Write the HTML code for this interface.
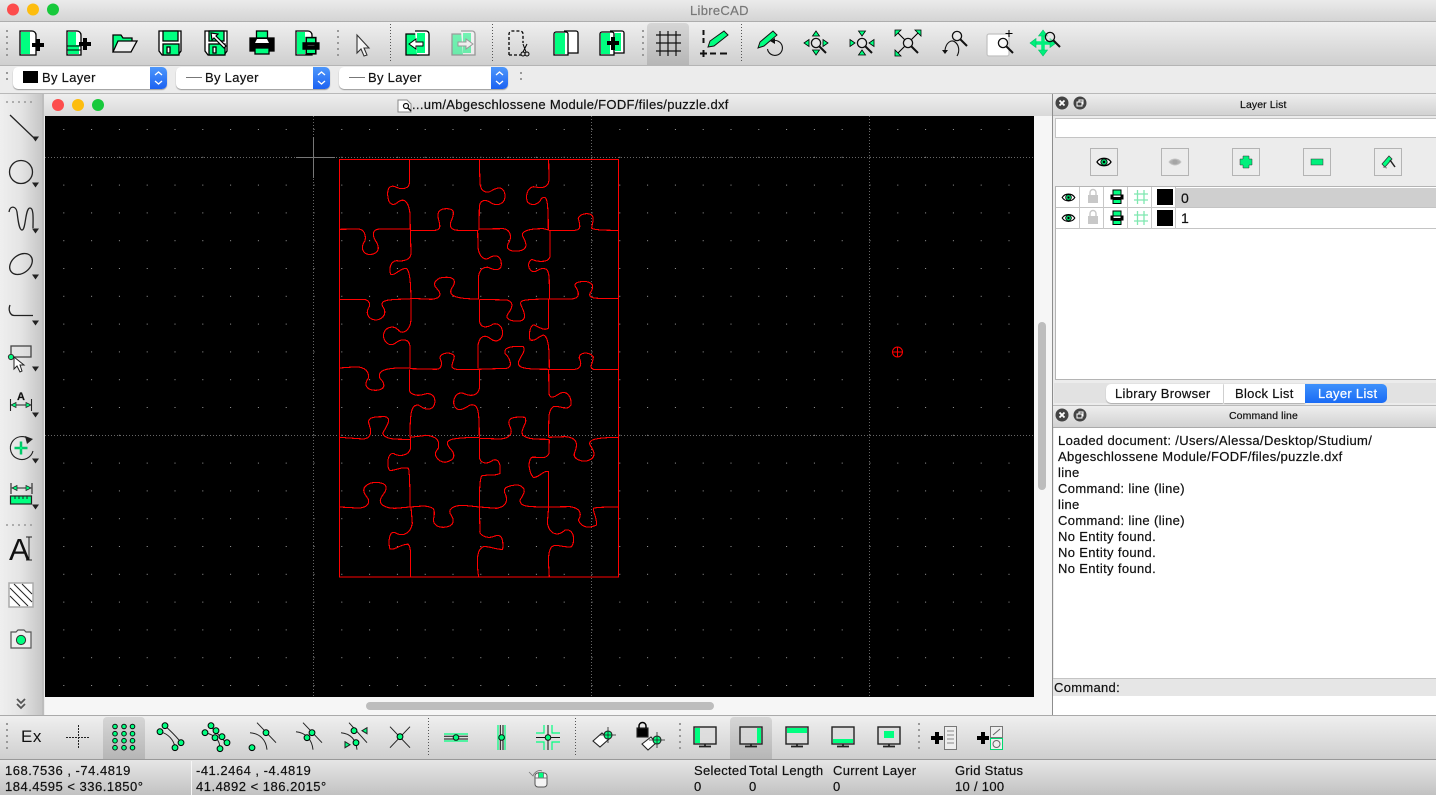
<!DOCTYPE html>
<html><head><meta charset="utf-8"><title>LibreCAD</title>
<style>
html,body{margin:0;padding:0;width:1436px;height:795px;overflow:hidden;background:#ececec;font-family:"Liberation Sans",Arial,sans-serif;color:#111}
.b{position:absolute}
.t{position:absolute;white-space:nowrap;font-size:13px;line-height:16px;letter-spacing:.3px;-webkit-text-stroke:.2px currentColor}
svg{position:absolute;left:0;top:0}
</style></head><body>
<div class="b" style="left:0;top:0;width:1436px;height:21px;background:linear-gradient(#ebebeb,#d4d4d4);border-bottom:1px solid #adadad"></div>
<div class="b" style="left:0;top:22px;width:1436px;height:43px;background:linear-gradient(#efefef,#cfcfcf);border-bottom:1px solid #b4b4b4"></div>
<div class="b" style="left:0;top:66px;width:1436px;height:27px;background:#ececec;border-bottom:1px solid #b9b9b9"></div>
<div class="b" style="left:0;top:94px;width:42px;height:622px;background:linear-gradient(90deg,#efefef,#e4e4e4 50%,#c6c6c6)"></div>
<div class="b" style="left:42px;top:94px;width:2px;height:622px;background:#bdbdbd"></div>
<div class="b" style="left:44px;top:94px;width:1008px;height:22px;background:linear-gradient(#efefef,#d9d9d9);border-radius:5px 5px 0 0"></div>
<div class="b" style="left:45px;top:116px;width:989px;height:581px;background:#000"></div>
<div class="b" style="left:45px;top:697px;width:989px;height:18px;background:#f6f6f6"></div>
<div class="b" style="left:1034px;top:116px;width:18px;height:599px;background:#f6f6f6"></div>
<div class="b" style="left:366px;top:702px;width:348px;height:8px;background:#bdbdbd;border-radius:4px"></div>
<div class="b" style="left:1038px;top:322px;width:8px;height:168px;background:#bdbdbd;border-radius:4px"></div>
<div class="b" style="left:1052px;top:94px;width:1px;height:622px;background:#8d8d8d"></div>
<div class="b" style="left:1053px;top:94px;width:383px;height:622px;background:#ececec"></div>
<div class="b" style="left:1053px;top:94px;width:383px;height:21px;background:linear-gradient(#eee,#d2d2d2);border-bottom:1px solid #bbb"></div>
<div class="b" style="left:1055px;top:118px;width:381px;height:18px;background:#fff;border:1px solid #c4c4c4;border-right:0"></div>
<div class="b" style="left:1055px;top:186px;width:381px;height:194px;background:#fff;border:1px solid #b4b4b4;border-right:0;box-sizing:border-box"></div>
<div class="b" style="left:1176px;top:188px;width:260px;height:19px;background:#cfcfcf"></div>
<div class="b" style="left:1056px;top:207px;width:380px;height:1px;background:#c4c4c4"></div>
<div class="b" style="left:1056px;top:228px;width:380px;height:1px;background:#c4c4c4"></div>
<div class="b" style="left:1079px;top:187px;width:1px;height:42px;background:#c8c8c8"></div>
<div class="b" style="left:1103px;top:187px;width:1px;height:42px;background:#c8c8c8"></div>
<div class="b" style="left:1127px;top:187px;width:1px;height:42px;background:#c8c8c8"></div>
<div class="b" style="left:1151px;top:187px;width:1px;height:42px;background:#c8c8c8"></div>
<div class="b" style="left:1175px;top:187px;width:1px;height:42px;background:#c8c8c8"></div>
<div class="b" style="left:1054px;top:383px;width:382px;height:20px;background:#e2e2e2"></div>
<div class="b" style="left:1106px;top:384px;width:117px;height:19px;background:#fff;border-radius:5px 0 0 5px;box-shadow:0 1px 1px #aaa"></div>
<div class="b" style="left:1224px;top:384px;width:81px;height:19px;background:#fff;box-shadow:0 1px 1px #aaa"></div>
<div class="b" style="left:1305px;top:384px;width:82px;height:19px;background:linear-gradient(#3e91fb,#1a6bf5);border-radius:0 5px 5px 0"></div>
<div class="b" style="left:1053px;top:405px;width:383px;height:21px;background:linear-gradient(#eee,#d2d2d2);border-top:1px solid #bbb;border-bottom:1px solid #aaa"></div>
<div class="b" style="left:1054px;top:428px;width:382px;height:250px;background:#fff"></div>
<div class="b" style="left:1053px;top:678px;width:383px;height:17px;background:#e6e6e6;border-top:1px solid #c4c4c4"></div>
<div class="b" style="left:1053px;top:696px;width:383px;height:19px;background:#fff"></div>
<div class="b" style="left:0;top:715px;width:1436px;height:1px;background:#aaa"></div>
<div class="b" style="left:0;top:716px;width:1436px;height:43px;background:linear-gradient(#efefef,#cfcfcf);border-bottom:1px solid #999"></div>
<div class="b" style="left:0;top:760px;width:1436px;height:35px;background:linear-gradient(#e6e6e6,#c2c2c2)"></div>
<div class="b" style="left:191px;top:761px;width:1px;height:34px;background:#f6f6f6"></div>
<div class="b" style="left:647px;top:23px;width:42px;height:42px;background:linear-gradient(#d6d6d6,#b6b6b6);border-radius:4px 4px 0 0"></div>
<div class="b" style="left:103px;top:717px;width:42px;height:42px;background:linear-gradient(#d6d6d6,#b6b6b6);border-radius:4px 4px 0 0"></div>
<div class="b" style="left:730px;top:717px;width:42px;height:42px;background:linear-gradient(#d6d6d6,#b6b6b6);border-radius:4px 4px 0 0"></div>
<div class="b" style="left:13px;top:67px;width:154px;height:22px;background:#fff;border-radius:5px;box-shadow:0 1px 1px #999"></div>
<div class="b" style="left:150px;top:67px;width:17px;height:22px;background:linear-gradient(#4d97fb,#1c62f2);border-radius:0 5px 5px 0"></div>
<div class="b" style="left:176px;top:67px;width:154px;height:22px;background:#fff;border-radius:5px;box-shadow:0 1px 1px #999"></div>
<div class="b" style="left:313px;top:67px;width:17px;height:22px;background:linear-gradient(#4d97fb,#1c62f2);border-radius:0 5px 5px 0"></div>
<div class="b" style="left:339px;top:67px;width:169px;height:22px;background:#fff;border-radius:5px;box-shadow:0 1px 1px #999"></div>
<div class="b" style="left:491px;top:67px;width:17px;height:22px;background:linear-gradient(#4d97fb,#1c62f2);border-radius:0 5px 5px 0"></div>

<svg width="1436" height="795" viewBox="0 0 1436 795" fill="none">
<defs>
<pattern id="dots" x="35.5" y="129" width="27.8" height="27.8" patternUnits="userSpaceOnUse"><rect width="1" height="1" fill="#9a9a9a"/></pattern>
<clipPath id="cv"><rect x="45" y="116" width="989" height="581"/></clipPath>
<g id="eye"><path d="M-7,0C-4,-5 4,-5 7,0C4,5 -4,5 -7,0Z" fill="#fff" stroke="#000" stroke-width="1.3"/><circle r="3.2" fill="#00c864" stroke="#000" stroke-width=".8"/><circle r="1.2" fill="#000"/></g>
<g id="prn"><rect x="-4" y="-7" width="8" height="5" fill="#00ff80" stroke="#000"/><rect x="-6.5" y="-2.5" width="13" height="5" fill="#000"/><rect x="-3.5" y="-1.5" width="7" height="1.5" fill="#fff"/><rect x="-4" y="2.5" width="8" height="4" fill="#00ff80" stroke="#000"/></g>
<g id="grd" stroke="#7fe8b0" stroke-width="1.3"><path d="M-3.5,-7V7M3,-7V7M-7,-3H7M-7,3H7"/></g>
<g id="lock"><rect x="-5" y="-2" width="10" height="8" fill="#c8c8c8"/><path d="M-3,-2V-4.5a3,3 0 0 1 6,0V-2" stroke="#c8c8c8" stroke-width="1.4"/></g>
<g id="arr"><path d="M-3.5,-2.5H3.5L0,2.5Z" fill="#222"/></g>
<g id="mag"><circle r="4.6" fill="#eee" fill-opacity=".4" stroke="#111" stroke-width="1.3"/><path d="M3.5,3.5L10,10" stroke="#111" stroke-width="2"/></g>
<g id="mon"><rect x="-11" y="-11" width="22" height="17" fill="#dcdcdc" fill-opacity=".7" stroke="#222" stroke-width="1.4"/><path d="M0,6V8M-6,8.500H6" stroke="#222" stroke-width="1.800"/></g>
<g id="sd"><circle r="2.900" fill="#00ff80" stroke="#000" stroke-width="1"/></g>
</defs>
<rect x="45" y="116" width="989" height="581" fill="url(#dots)"/>
<g clip-path="url(#cv)" stroke="#666" stroke-width="1" stroke-dasharray="1 2">
<path d="M45,157.5H1034M45,435.5H1034M313.5,116V697M591.5,116V697M869.5,116V697"/>
</g>
<path d="M313.5,137V178M296,157.5H335" stroke="#777" stroke-width="1"/>
<circle cx="897.5" cy="352" r="5" stroke="#f00"/><path d="M892,352H903M897.5,347V357" stroke="#f00"/>

<g fill="none" stroke="#f00" stroke-width="3.3" shape-rendering="crispEdges" transform="translate(330,150) scale(.3333)">
<rect x="28" y="28" width="838" height="1253"/>
<path d="M238,28L238,100C238,115 215,120 200,112C180,102 172,115 173,135C175,165 190,170 205,155C220,145 235,150 240,190L241,240L243,310C243,330 220,335 200,332C178,335 178,360 182,373C195,378 210,355 228,355C240,360 242,400 243,448L243,510C240,545 215,555 205,540C190,525 165,530 160,555C162,580 180,590 195,580C215,565 238,565 240,590L240,656"/>
<path d="M448,28L450,100C452,125 470,132 485,122C505,110 522,110 525,135C527,160 505,170 485,160C465,145 448,150 448,175L447,240"/>
<path d="M443,240L444,290C446,320 465,335 480,322C500,312 515,320 514,345C512,365 490,360 475,352C455,350 445,365 445,390L445,448"/>
<path d="M448,448L448,510C450,535 470,535 490,522C510,518 518,535 518,550C515,575 495,578 480,565C460,550 445,565 444,590L444,656"/>
<path d="M656,28L657,90C655,115 635,115 610,110C590,115 587,140 592,155C605,170 625,165 635,145C650,135 655,145 655,240"/>
<path d="M660,240L660,320C655,340 620,335 605,328C590,340 595,360 610,365C625,365 630,350 650,358C660,370 658,400 658,448"/>
<path d="M656,448L655,535C640,545 620,525 610,525C600,530 596,550 600,570C615,575 625,560 640,555C655,560 658,590 658,656"/>
<path d="M28,238L85,237C105,238 108,260 105,272C92,290 95,312 120,314C150,310 150,290 135,270C125,250 130,238 150,237L240,237"/>
<path d="M240,241L315,241C335,240 330,225 325,205C320,185 330,176 350,176C375,176 373,190 365,210C355,230 365,241 385,241L445,241"/>
<path d="M445,237L520,236C545,240 545,265 535,280C525,300 545,305 565,303C595,300 590,280 580,262C570,245 590,236 640,236L657,240"/>
<path d="M657,241L735,241C755,240 750,225 745,205C750,190 775,188 785,195C795,205 785,225 785,235C795,242 866,241 866,241"/>
<path d="M28,448L100,448C120,450 122,465 115,475C105,495 120,510 140,510C165,505 170,485 158,470C150,450 170,448 240,447"/>
<path d="M240,445L305,448C335,445 335,430 320,415C305,400 320,382 345,382C375,380 380,395 365,415C355,435 370,447 445,447"/>
<path d="M448,448L530,450C550,455 550,470 535,490C520,510 550,515 570,513C590,510 585,490 575,470C565,450 575,448 656,447"/>
<path d="M656,447L725,447C745,445 750,435 740,415C725,400 745,393 770,395C795,400 790,415 780,430C775,445 790,447 866,445"/>
<path d="M240,656L320,658C340,655 335,635 330,625C330,605 370,605 373,620C370,640 355,655 380,658L445,658"/>
<path d="M445,658L530,655C550,650 540,625 525,610C520,590 550,588 580,590C590,605 565,625 565,640C565,655 590,658 657,658"/>
<path d="M657,658L735,658C755,655 755,640 748,625C745,605 780,605 790,620C790,640 775,650 790,658L866,658"/>
</g>
<g fill="none" stroke="#f00" stroke-width="3.3" shape-rendering="crispEdges" transform="translate(330,360) scale(.3333)">
<path d="M28,24L70,21C110,18 118,40 115,55C100,75 110,90 135,91C170,90 165,70 150,55C140,30 170,22 240,24"/>
<path d="M238,28L238,90C240,105 265,110 285,102C315,95 320,125 310,140C295,155 280,145 265,135C245,135 240,150 240,232"/>
<path d="M242,232L242,265C235,290 205,290 190,280C170,280 170,325 180,332C200,330 215,320 235,325C240,335 240,441 240,441"/>
<path d="M243,441L247,490C240,525 215,530 195,518C175,510 175,555 180,567C195,572 215,550 235,553C245,565 242,600 241,652"/>
<path d="M448,28L448,85C445,105 425,112 400,100C380,95 368,115 372,135C380,155 395,152 420,135C445,130 448,150 448,232"/>
<path d="M448,235L448,290C450,310 470,315 490,300C510,295 512,320 510,340C495,350 470,342 455,348C447,360 448,441 448,441"/>
<path d="M448,441L450,510C445,525 470,537 490,530C520,515 520,550 518,568C500,570 480,558 460,560C438,570 440,610 446,652"/>
<path d="M656,28L657,100C660,120 675,110 690,100C715,90 725,115 723,135C710,155 690,135 670,140C655,150 656,170 656,232"/>
<path d="M658,238L657,280C650,300 625,290 605,292C590,310 600,340 610,352C625,355 640,330 655,335L656,441"/>
<path d="M656,441L652,490C660,525 685,530 705,510C730,505 738,540 725,560C705,565 680,550 665,560C650,580 657,620 658,652"/>
<path d="M28,232L100,237C125,235 125,215 118,195C108,170 135,170 165,170C190,175 165,205 158,220C165,240 200,238 240,238"/>
<path d="M240,232L290,226C320,230 330,240 325,265C305,285 325,305 345,307C380,300 375,280 360,265C340,240 355,233 448,232"/>
<path d="M448,235L510,237C540,235 550,220 540,200C525,170 560,170 585,172C595,190 570,205 578,225C590,238 620,238 657,238"/>
<path d="M657,232L705,230C740,232 745,250 735,275C725,295 750,305 770,303C800,295 795,275 780,255C775,240 790,233 866,232"/>
<path d="M28,441L80,444C110,445 125,430 110,410C85,380 120,367 140,367C175,370 175,385 155,410C140,435 170,445 195,445L240,441"/>
<path d="M240,441L280,438C315,440 315,450 312,470C305,495 325,502 340,502C375,500 375,480 360,460C355,440 385,436 400,436L448,441"/>
<path d="M448,441L500,445C530,440 535,420 525,400C515,380 545,375 565,375C595,385 580,405 570,420C570,440 590,441 656,441"/>
<path d="M656,441L720,440C755,445 755,465 745,480C755,505 780,505 800,495C800,470 790,460 790,445C800,441 866,441 866,441"/>
</g>

<!-- traffic lights -->
<circle cx="13" cy="9.5" r="6" fill="#fd4c4c"/><circle cx="33" cy="9.5" r="6" fill="#fdbd0e"/><circle cx="53" cy="9.5" r="6" fill="#17c93b"/>
<circle cx="58" cy="105" r="6" fill="#fd4c4c"/><circle cx="78" cy="105" r="6" fill="#fdbd0e"/><circle cx="98" cy="105" r="6" fill="#17c93b"/>

<!-- handles and separators -->
<g stroke="#999" stroke-width="2" stroke-dasharray="2 4">
<path d="M7,30V56M338,30V56M643,30V56M7,72V84M521,72V84"/>
<path d="M7,723V750M680,723V750M919,723V750"/>
<path d="M6,102H33M6,525H33" stroke-width="1.5"/>
</g>
<g stroke="#555" stroke-dasharray="1 2">
<path d="M390.5,24V63M492.5,24V63M741.5,24V63M428.5,718V757M575.5,718V757"/>
</g>

<!-- main toolbar -->
<g stroke="#000" stroke-width="1.3">
<g transform="translate(32,43)"><path d="M-12,-12H0a4,4 0 0 1 4,4V12H-12Z" fill="#fff"/><path d="M-11,-11H-2V11H-11Z" fill="#00ff80" stroke="none"/><path d="M0,0H4V-4H8V0H12V4H8V8H4V4H0Z" fill="#000" stroke="none"/></g>
<g transform="translate(78,43)"><path d="M-11,-12H-1a4,4 0 0 1 4,4V12H-11Z" fill="#fff"/><path d="M-10,-11H-2V2H-10Z" fill="#00ff80" stroke="none"/><path d="M-10,2H1V11H-10Z" fill="#00ff80" stroke="none"/><path d="M-11,3H3M-11,7H3" stroke-width="1"/><path d="M1,-1H5V-5H9V-1H13V3H9V7H5V3H1Z" fill="#000" stroke="none"/></g>
<g transform="translate(124,43)"><path d="M-11,9V-8H-3L-1,-5H8V-2" fill="#00ff80"/><path d="M-11,9L-6,-2H13L7,9Z" fill="#eee"/></g>
<g transform="translate(170,43)"><path d="M-11,-12H11V8L8,12H-8L-11,8Z" fill="#fff"/><rect x="-7" y="-12" width="15" height="10" fill="#00ff80"/><rect x="-7" y="1" width="16" height="11" fill="#00ff80"/><rect x="-3" y="4" width="3" height="6" fill="#fff"/></g>
<g transform="translate(216,43)"><path d="M-11,-12H11V8L8,12H-8L-11,8Z" fill="#fff"/><rect x="-7" y="-12" width="15" height="10" fill="#00ff80"/><rect x="-7" y="1" width="16" height="11" fill="#00ff80"/><rect x="-3" y="4" width="3" height="6" fill="#fff"/><path d="M-5,-10L-4,-3L-2,-5L8,5L10,3L0,-7L2,-9Z" fill="#fff" stroke-width="1.2"/></g>
<g transform="translate(262,43)"><rect x="-5.500" y="-12" width="11" height="9" fill="#00ff80"/><rect x="-12" y="-5" width="24" height="13" fill="#000"/><path d="M-5,-4H5L7,0H-7Z" fill="#fff" stroke="none"/><rect x="-7" y="5" width="14" height="6" fill="#00ff80"/></g>
<g transform="translate(308,43)"><path d="M-12,-12H0a4,4 0 0 1 4,4V12H-12Z" fill="#fff"/><path d="M-11,-11H-3V11H-11Z" fill="#00ff80" stroke="none"/><use href="#prn" transform="translate(3,3) scale(1.2)"/></g>
<path d="M357,35V53L361,49L364,56L367,55L364,48H369Z" fill="#f5f5f5" stroke="#333" stroke-width="1.1"/>
<g transform="translate(418,43)"><path d="M-12,-9H0V12H-12Z" fill="#00ff80"/><path d="M-3,-12H8a3,3 0 0 1 3,3V12H-1" fill="#fff"/><rect x="-1" y="-10" width="8" height="20" fill="#00ff80" stroke="none"/><path d="M-9,1L-2,-4V-1H5V3H-2V6Z" fill="#fff" stroke-width="1"/></g>
<g transform="translate(464,43)" opacity=".5"><path d="M-12,-9H0V12H-12Z" fill="#00ff80" stroke="#555"/><path d="M-3,-12H8a3,3 0 0 1 3,3V12H-1" fill="#fff" stroke="#555"/><rect x="-1" y="-10" width="8" height="20" fill="#00ff80" stroke="none"/><path d="M9,1L2,-4V-1H-6V3H2V6Z" fill="#fff" stroke="#555" stroke-width="1"/></g>
<g transform="translate(518,43)"><path d="M-9,12V-9a3,3 0 0 1 3,-3H2a3,3 0 0 1 3,3V0M-9,12H3" stroke-dasharray="3 2" fill="none"/><path d="M5,1L8,9M9,1L5,9" stroke-width="1"/><circle cx="5" cy="11" r="2" fill="none" stroke-width="1"/><circle cx="9" cy="11" r="2" fill="none" stroke-width="1"/></g>
<g transform="translate(566,43)"><path d="M-2,-12H10a2,2 0 0 1 2,2V10H2" fill="#fff"/><path d="M-12,-9a2,2 0 0 1 2,-2H0a2,2 0 0 1 2,2V12H-12Z" fill="#fff"/><rect x="-11" y="-10" width="10" height="21" fill="#00ff80" stroke="none"/></g>
<g transform="translate(612,43)"><path d="M-2,-12H10a2,2 0 0 1 2,2V10H2" fill="#fff"/><path d="M-12,-9a2,2 0 0 1 2,-2H0a2,2 0 0 1 2,2V12H-12Z" fill="#fff"/><rect x="-11" y="-10" width="9" height="21" fill="#00ff80" stroke="none"/><rect x="3" y="-10" width="6" height="18" fill="#00ff80" stroke="none"/><path d="M-5,-2H-1V-6H3V-2H7V2H3V7H-1V2H-5Z" fill="#000" stroke="none"/></g>
<path d="M656,35H681M656,43H681M656,51H681M660,31V56M668,31V56M676,31V56" stroke="#111" stroke-width="1.2"/>
<!-- edit layer pen -->
<path d="M703.500,30V43" stroke="#111" stroke-width="2" stroke-dasharray="5 3"/>
<path d="M703.500,50V57M700,53.500H707M710,53.500H716M720,53.500H727" stroke="#111" stroke-width="2"/>
<path d="M708,47L710,41L724,31L728,35L714,46Z" fill="#00ff80" stroke="#111" stroke-width="1"/>
<!-- pencil undo -->
<path d="M758,48L760,42L773,31L777,35L764,46Z" fill="#00ff80" stroke="#111" stroke-width="1"/>
<path d="M772,41A7.500,7.500 0 1 1 767.500,49" stroke="#111" stroke-width="1.100"/><path d="M775,38V44L770,41Z" fill="#111" stroke="none"/>
<g transform="translate(816,43)" stroke-width=".8"><path d="M0,-12L-3.500,-7H3.500Z" fill="#00ff80"/><path d="M0,12L-3.500,7H3.500Z" fill="#00ff80"/><path d="M-12,0L-7,-3.500V3.500Z" fill="#00ff80"/><path d="M12,0L7,-3.500V3.500Z" fill="#00ff80"/><use href="#mag"/></g>
<g transform="translate(862,43)" stroke-width=".8"><path d="M0,-7L-3.500,-12H3.500Z" fill="#00ff80"/><path d="M0,7L-3.500,12H3.500Z" fill="#00ff80"/><path d="M-7,0L-12,-3.500V3.500Z" fill="#00ff80"/><path d="M7,0L12,-3.500V3.500Z" fill="#00ff80"/><use href="#mag"/></g>
<g transform="translate(908,43)"><path d="M-3,-3L-11,-11M3,-3L11,-11M-3,3L-11,11" stroke-width="1.100"/><path d="M-13,-13H-7L-13,-7Z" fill="#00ff80" stroke-width=".8"/><path d="M13,-13H7L13,-7Z" fill="#00ff80" stroke-width=".8"/><path d="M-13,13H-7L-13,7Z" fill="#00ff80" stroke-width=".8"/><use href="#mag"/></g>
<!-- zoom pan -->
<use href="#mag" transform="translate(957,36)"/>
<path d="M945,50C946,43 951,39 955,42C959,45 960,51 957,56" stroke="#111" stroke-width="1.100"/><path d="M942,50H948L945,54Z" fill="#111" stroke="none"/>
<g transform="translate(1000,43)"><rect x="-13" y="-9" width="22" height="22" rx="2" fill="#fff" stroke="#c2c2c2"/><use href="#mag" transform="translate(3,0)"/><path d="M9,-13V-6M5.500,-9.500H12.500" stroke-width="1"/></g>
<!-- move zoom -->
<path d="M1043,34V52M1034,43H1052" stroke="#00f07c" stroke-width="3.500"/>
<path d="M1043,30L1038.500,36H1047.500Z M1043,56L1038.500,50H1047.500Z M1030,43L1036,38.500V47.500Z M1056,43L1050,38.500V47.500Z" fill="#00f07c" stroke="#00c064" stroke-width=".6"/>
<use href="#mag" transform="translate(1050,37)"/>
</g>
<!-- combo chevrons -->
<g stroke="#fff" stroke-width="1.3">
<path d="M155,75L158.500,72L162,75M155,81L158.500,84L162,81"/><path d="M318,75L321.500,72L325,75M318,81L321.500,84L325,81"/><path d="M496,75L499.500,72L503,75M496,81L499.500,84L503,81"/>
</g>
<rect x="23" y="71" width="15" height="12" fill="#000"/>
<path d="M186,77.500H202M349,77.500H365" stroke="#777" stroke-width="1"/>
<path d="M398,100H407L411,104V112H398Z" fill="#fff" stroke="#888"/><circle cx="406" cy="106" r="2.500" stroke="#111" stroke-width="1.200"/><path d="M408,108L411,111" stroke="#111" stroke-width="1.500"/>

<!-- left toolbar -->
<g stroke="#222" stroke-width="1.300">
<path d="M10,115L33,137"/>
<circle cx="21" cy="172" r="11.500"/>
<path d="M9,212C10,205 16,206 17,212C18,220 19,230 22,230C26,230 25,208 30,208C34,208 33,220 33,228"/>
<ellipse cx="21" cy="264" rx="12.500" ry="9" transform="rotate(-38 21 264)"/>
<path d="M33,315.500H15C10,316 8,310 10,305"/>
<rect x="11" y="346" width="20" height="11" stroke="#444" fill="#ddd" fill-opacity=".3"/><circle cx="11" cy="357" r="2.600" fill="#00ff80" stroke="#333" stroke-width="1"/><path d="M14,357V369L17,366L20,372L22,371L20,365H24Z" fill="#fff" stroke-width="1"/>
<path d="M10.500,399V411M31.500,399V411M12,405H30" stroke-width="1.100"/><path d="M11,405L16,402.500V407.500Z" fill="#00ff80" stroke-width=".7"/><path d="M31,405L26,402.500V407.500Z" fill="#00ff80" stroke-width=".7"/>
<path d="M33,451A11.500,11.500 0 1 1 29,439" stroke-width="1.100"/><path d="M25,436L33,439L27,444Z" fill="#222" stroke="none"/>
<path d="M21,441.500V454.500M14.500,448H27.500" stroke="#00c868" stroke-width="2.500"/><circle cx="21" cy="448" r="1.300" fill="#00ff80" stroke="none"/>
<path d="M11,483V494M32,483V494M13,488H30" stroke-width="1.100"/><path d="M12,488L17,485.500V490.500Z" fill="#00ff80" stroke-width=".7"/><path d="M31,488L26,485.500V490.500Z" fill="#00ff80" stroke-width=".7"/><rect x="10.500" y="496" width="21" height="8" fill="#00ff80" stroke-width="1.200"/><path d="M15,496V499M19,496V499M23,496V499M27,496V499" stroke-width="1"/>
<path d="M26,537H32M29,537V560M26,560H32" stroke-width="1"/>
<rect x="9" y="583" width="24" height="24" fill="#fff" stroke="#aaa" stroke-width="1.500"/><path d="M10,588L28,606M10,596L20,606M14,584L32,602M22,584L32,594" stroke-width="1"/>
<path d="M11,632H16L18,630H24L26,632H31V648H11Z" fill="#eee" stroke="#555" stroke-width="1.200"/><circle cx="21" cy="640" r="4.600" fill="#00ff80" stroke="#333" stroke-width="1"/>
<path d="M17,699L21,703L25,699M17,704L21,708L25,704" stroke="#555" stroke-width="1.800"/>
</g>
<use href="#arr" transform="translate(35.500,139)"/><use href="#arr" transform="translate(35.500,185)"/><use href="#arr" transform="translate(35.500,231)"/><use href="#arr" transform="translate(35.500,277)"/><use href="#arr" transform="translate(35.500,323)"/><use href="#arr" transform="translate(35.500,369)"/><use href="#arr" transform="translate(35.500,415)"/><use href="#arr" transform="translate(35.500,461)"/><use href="#arr" transform="translate(35.500,507)"/>

<!-- layer panel -->
<g stroke="#b4b4b4" stroke-width="1" fill="#ececec">
<rect x="1090.500" y="148.500" width="27" height="27"/><rect x="1161.500" y="148.500" width="27" height="27"/><rect x="1232.500" y="148.500" width="27" height="27"/><rect x="1303.500" y="148.500" width="27" height="27"/><rect x="1374.500" y="148.500" width="27" height="27"/>
</g>
<use href="#eye" transform="translate(1104,162)"/>
<g transform="translate(1175,162)" opacity=".6"><path d="M-6,0C-3,-4 3,-4 6,0C3,4 -3,4 -6,0Z" fill="#888" stroke="#aaa"/><circle r="2.500" fill="#777"/></g>
<path d="M1243,156H1249V159H1252V165H1249V168H1243V165H1240V159H1243Z" fill="#00f07c" stroke="#333" stroke-width=".5"/>
<rect x="1311" y="159" width="12" height="6" fill="#00f07c" stroke="#333" stroke-width=".5"/>
<g transform="translate(1388,162)"><path d="M-6,2L1,-6L4,-3L-3,5Z" fill="#00ff80" stroke="#333" stroke-width=".8"/><path d="M2,-2L7,5" stroke="#222" stroke-width="1.500"/><path d="M-5,5L-1,6" stroke="#888"/></g>
<g transform="translate(1068.500,197.500) scale(.9)"><use href="#eye"/></g><g transform="translate(1068.500,218) scale(.9)"><use href="#eye"/></g>
<use href="#lock" transform="translate(1093,197)"/><use href="#lock" transform="translate(1093,218)"/>
<use href="#prn" transform="translate(1117,197)"/><use href="#prn" transform="translate(1117,218)"/>
<use href="#grd" transform="translate(1141,197)"/><use href="#grd" transform="translate(1141,218)"/>
<rect x="1157" y="189" width="16" height="16" fill="#000"/><rect x="1157" y="210" width="16" height="16" fill="#000"/>
<g><circle cx="1062" cy="103" r="6.500" fill="#444"/><path d="M1059.500,100.500L1064.500,105.500M1064.500,100.500L1059.500,105.500" stroke="#fff" stroke-width="1.800"/><circle cx="1080" cy="103" r="6.500" fill="#444"/><rect x="1077" y="102" width="5" height="4" stroke="#fff"/><path d="M1079,102V100H1083V104H1082" stroke="#fff"/></g>
<g><circle cx="1062" cy="415" r="6.500" fill="#444"/><path d="M1059.500,412.500L1064.500,417.500M1064.500,412.500L1059.500,417.500" stroke="#fff" stroke-width="1.800"/><circle cx="1080" cy="415" r="6.500" fill="#444"/><rect x="1077" y="414" width="5" height="4" stroke="#fff"/><path d="M1079,414V412H1083V416H1082" stroke="#fff"/></g>

<!-- bottom toolbar -->
<path d="M66,737.500H90M78.500,725V749" stroke="#222" stroke-dasharray="2 1"/>
<g fill="#00ff80" stroke="#111" stroke-width="1">
<circle cx="115" cy="726.500" r="2.300"/><circle cx="124" cy="726.500" r="2.300"/><circle cx="132.500" cy="726.500" r="2.300"/>
<circle cx="115" cy="733.700" r="2.300"/><circle cx="124" cy="733.700" r="2.300"/><circle cx="132.500" cy="733.700" r="2.300"/>
<circle cx="115" cy="740.700" r="2.300"/><circle cx="124" cy="740.700" r="2.300"/><circle cx="132.500" cy="740.700" r="2.300"/>
<circle cx="115" cy="747.700" r="2.300"/><circle cx="124" cy="747.700" r="2.300"/><circle cx="132.500" cy="747.700" r="2.300"/>
</g>
<g stroke="#222" stroke-width="1" transform="translate(0,-2.300)">
<path d="M165,728C170,733 176,738 181,745M160,734C168,736 174,742 175,750"/><use href="#sd" x="165" y="728"/><use href="#sd" x="160" y="734"/><use href="#sd" x="181" y="745"/><use href="#sd" x="175" y="750"/>
<path d="M210,728L226,745M205,735C215,737 220,742 220,751"/><use href="#sd" x="211" y="728"/><use href="#sd" x="205" y="735"/><use href="#sd" x="216" y="733"/><use href="#sd" x="215" y="740"/><use href="#sd" x="222" y="739"/><use href="#sd" x="227" y="745"/><use href="#sd" x="220" y="751"/>
<path d="M257,725L276,745M250,735C260,736 266,742 267,752"/><use href="#sd" x="266" y="735"/><use href="#sd" x="252" y="750"/>
<path d="M303,725L322,745M296,734C306,735 312,742 313,752"/><use href="#sd" x="312" y="735"/><use href="#sd" x="307" y="740"/>
<path d="M349,725L367,745M341,735C351,736 356,742 357,752"/><use href="#sd" x="354" y="733"/><use href="#sd" x="356" y="745"/><path d="M367,730L362,733L367,736Z" fill="#00ff80"/><path d="M345,744L350,747L345,750Z" fill="#00ff80"/>
<path d="M390,729L410,750M410,729L390,750"/><use href="#sd" x="400" y="739"/>
</g>
<g>
<path d="M444,734H468M444,741H468" stroke="#00ff80" stroke-width="1.200"/><path d="M444,736.200H468M444,739H468" stroke="#111"/><circle cx="456" cy="737.500" r="2.800" fill="#00ff80" stroke="#111"/>
<path d="M498,725V750M505,725V750" stroke="#00ff80" stroke-width="1.200"/><path d="M500.300,725V750M503,725V750" stroke="#111"/><circle cx="501.600" cy="737.500" r="2.800" fill="#00ff80" stroke="#111"/>
<path d="M536,733H544V725M552,725V733H560M536,742H544V750M552,750V742H560" stroke="#00ff80" stroke-width="1.200"/><path d="M536,737.500H560M548,725V750" stroke="#111"/><circle cx="548" cy="737.500" r="2.800" fill="#00ff80" stroke="#111"/>
</g>
<g stroke="#222" stroke-width="1.100">
<path d="M593,741L602,733L609,739L600,747Z" fill="#fff"/><circle cx="608" cy="735" r="4" fill="#00ff80"/><path d="M600,735H616M608,727V743" stroke-width=".8"/>
<rect x="637" y="728" width="11" height="9" fill="#000"/><path d="M639,728V726a3.500,3.500 0 0 1 7,0V728" stroke="#000" stroke-width="1.500"/>
<path d="M642,744L651,737L656,743L648,750Z" fill="#fff"/><circle cx="657" cy="740" r="4" fill="#00ff80"/><path d="M649,740H665M657,732V748" stroke-width=".8"/>
</g>
<use href="#mon" transform="translate(705,738)"/><rect x="695" y="728" width="5" height="15" fill="#00ff80"/>
<use href="#mon" transform="translate(751,738)"/><rect x="757" y="728" width="4" height="15" fill="#00ff80"/>
<use href="#mon" transform="translate(797,738)"/><rect x="787" y="728" width="20" height="5" fill="#00ff80"/>
<use href="#mon" transform="translate(843,738)"/><rect x="833" y="739" width="20" height="4" fill="#00ff80"/>
<use href="#mon" transform="translate(889,738)"/><rect x="884" y="731" width="10" height="7" fill="#00ff80"/>
<path d="M931,736H935V732H939V736H943V740H939V744H935V740H931Z" fill="#000"/>
<rect x="944.500" y="726.500" width="12" height="23" fill="#eee" stroke="#777"/><path d="M947,731H954M947,735H954M947,739H954M947,743H954" stroke="#888"/>
<path d="M977,736H981V732H985V736H989V740H985V744H981V740H977Z" fill="#000"/>
<rect x="990.500" y="726.500" width="12" height="11" fill="#eee" stroke="#777"/><rect x="990.500" y="738.500" width="12" height="11" fill="#eee" stroke="#00d870"/><path d="M993,735L1000,729" stroke="#666"/><circle cx="996.500" cy="744" r="3.500" stroke="#666"/>
<g transform="translate(541,775)"><path d="M-12,-3L-8,1C-7,-2 -3,-6 1,-4" stroke="#777" stroke-width=".8"/><rect x="-6" y="-2" width="12" height="14" rx="3" fill="#f4f4f4" stroke="#555"/><rect x="-2.500" y="-2.500" width="5" height="5.500" fill="#00ff80" stroke="#555" stroke-width=".6"/><path d="M-6,3H6" stroke="#777"/></g>
</svg>

<div class="t" style="left:690px;top:3px;color:#777">LibreCAD</div>
<div class="t" style="left:42px;top:70px">By Layer</div>
<div class="t" style="left:205px;top:70px">By Layer</div>
<div class="t" style="left:368px;top:70px">By Layer</div>
<div class="t" style="left:412px;top:97px">...um/Abgeschlossene Module/FODF/files/puzzle.dxf</div>
<div class="t" style="left:1240px;top:97px;font-size:10.500px;letter-spacing:.1px">Layer List</div>
<div class="t" style="left:1229px;top:408px;font-size:10.500px;letter-spacing:.1px">Command line</div>
<div class="t" style="left:1181px;top:190px;font-size:14px">0</div>
<div class="t" style="left:1181px;top:210px;font-size:14px">1</div>
<div class="t" style="left:1115px;top:386px">Library Browser</div>
<div class="t" style="left:1235px;top:386px">Block List</div>
<div class="t" style="left:1318px;top:386px;color:#fff">Layer List</div>
<div class="t" style="left:1058px;top:433px;letter-spacing:.35px">Loaded document: /Users/Alessa/Desktop/Studium/<br>Abgeschlossene Module/FODF/files/puzzle.dxf<br>line<br>Command: line (line)<br>line<br>Command: line (line)<br>No Entity found.<br>No Entity found.<br>No Entity found.</div>
<div class="t" style="left:1054px;top:680px">Command:</div>
<div class="t" style="left:21px;top:727px;font-size:17px;line-height:20px;letter-spacing:.5px;-webkit-text-stroke:0">Ex</div>
<div class="t" style="left:9px;top:534px;font-size:31px;line-height:32px;letter-spacing:0;-webkit-text-stroke:0">A</div>
<div class="t" style="left:17px;top:391px;font-size:11px;line-height:12px;font-weight:bold;letter-spacing:0">A</div>
<div class="t" style="left:5px;top:763px;letter-spacing:.5px">168.7536 , -74.4819<br>184.4595 &lt; 336.1850°</div>
<div class="t" style="left:196px;top:763px;letter-spacing:.5px">-41.2464 , -4.4819<br>41.4892 &lt; 186.2015°</div>
<div class="t" style="left:694px;top:763px">Selected<br>0</div>
<div class="t" style="left:749px;top:763px">Total Length<br>0</div>
<div class="t" style="left:833px;top:763px">Current Layer<br>0</div>
<div class="t" style="left:955px;top:763px">Grid Status<br>10 / 100</div>
</body></html>
